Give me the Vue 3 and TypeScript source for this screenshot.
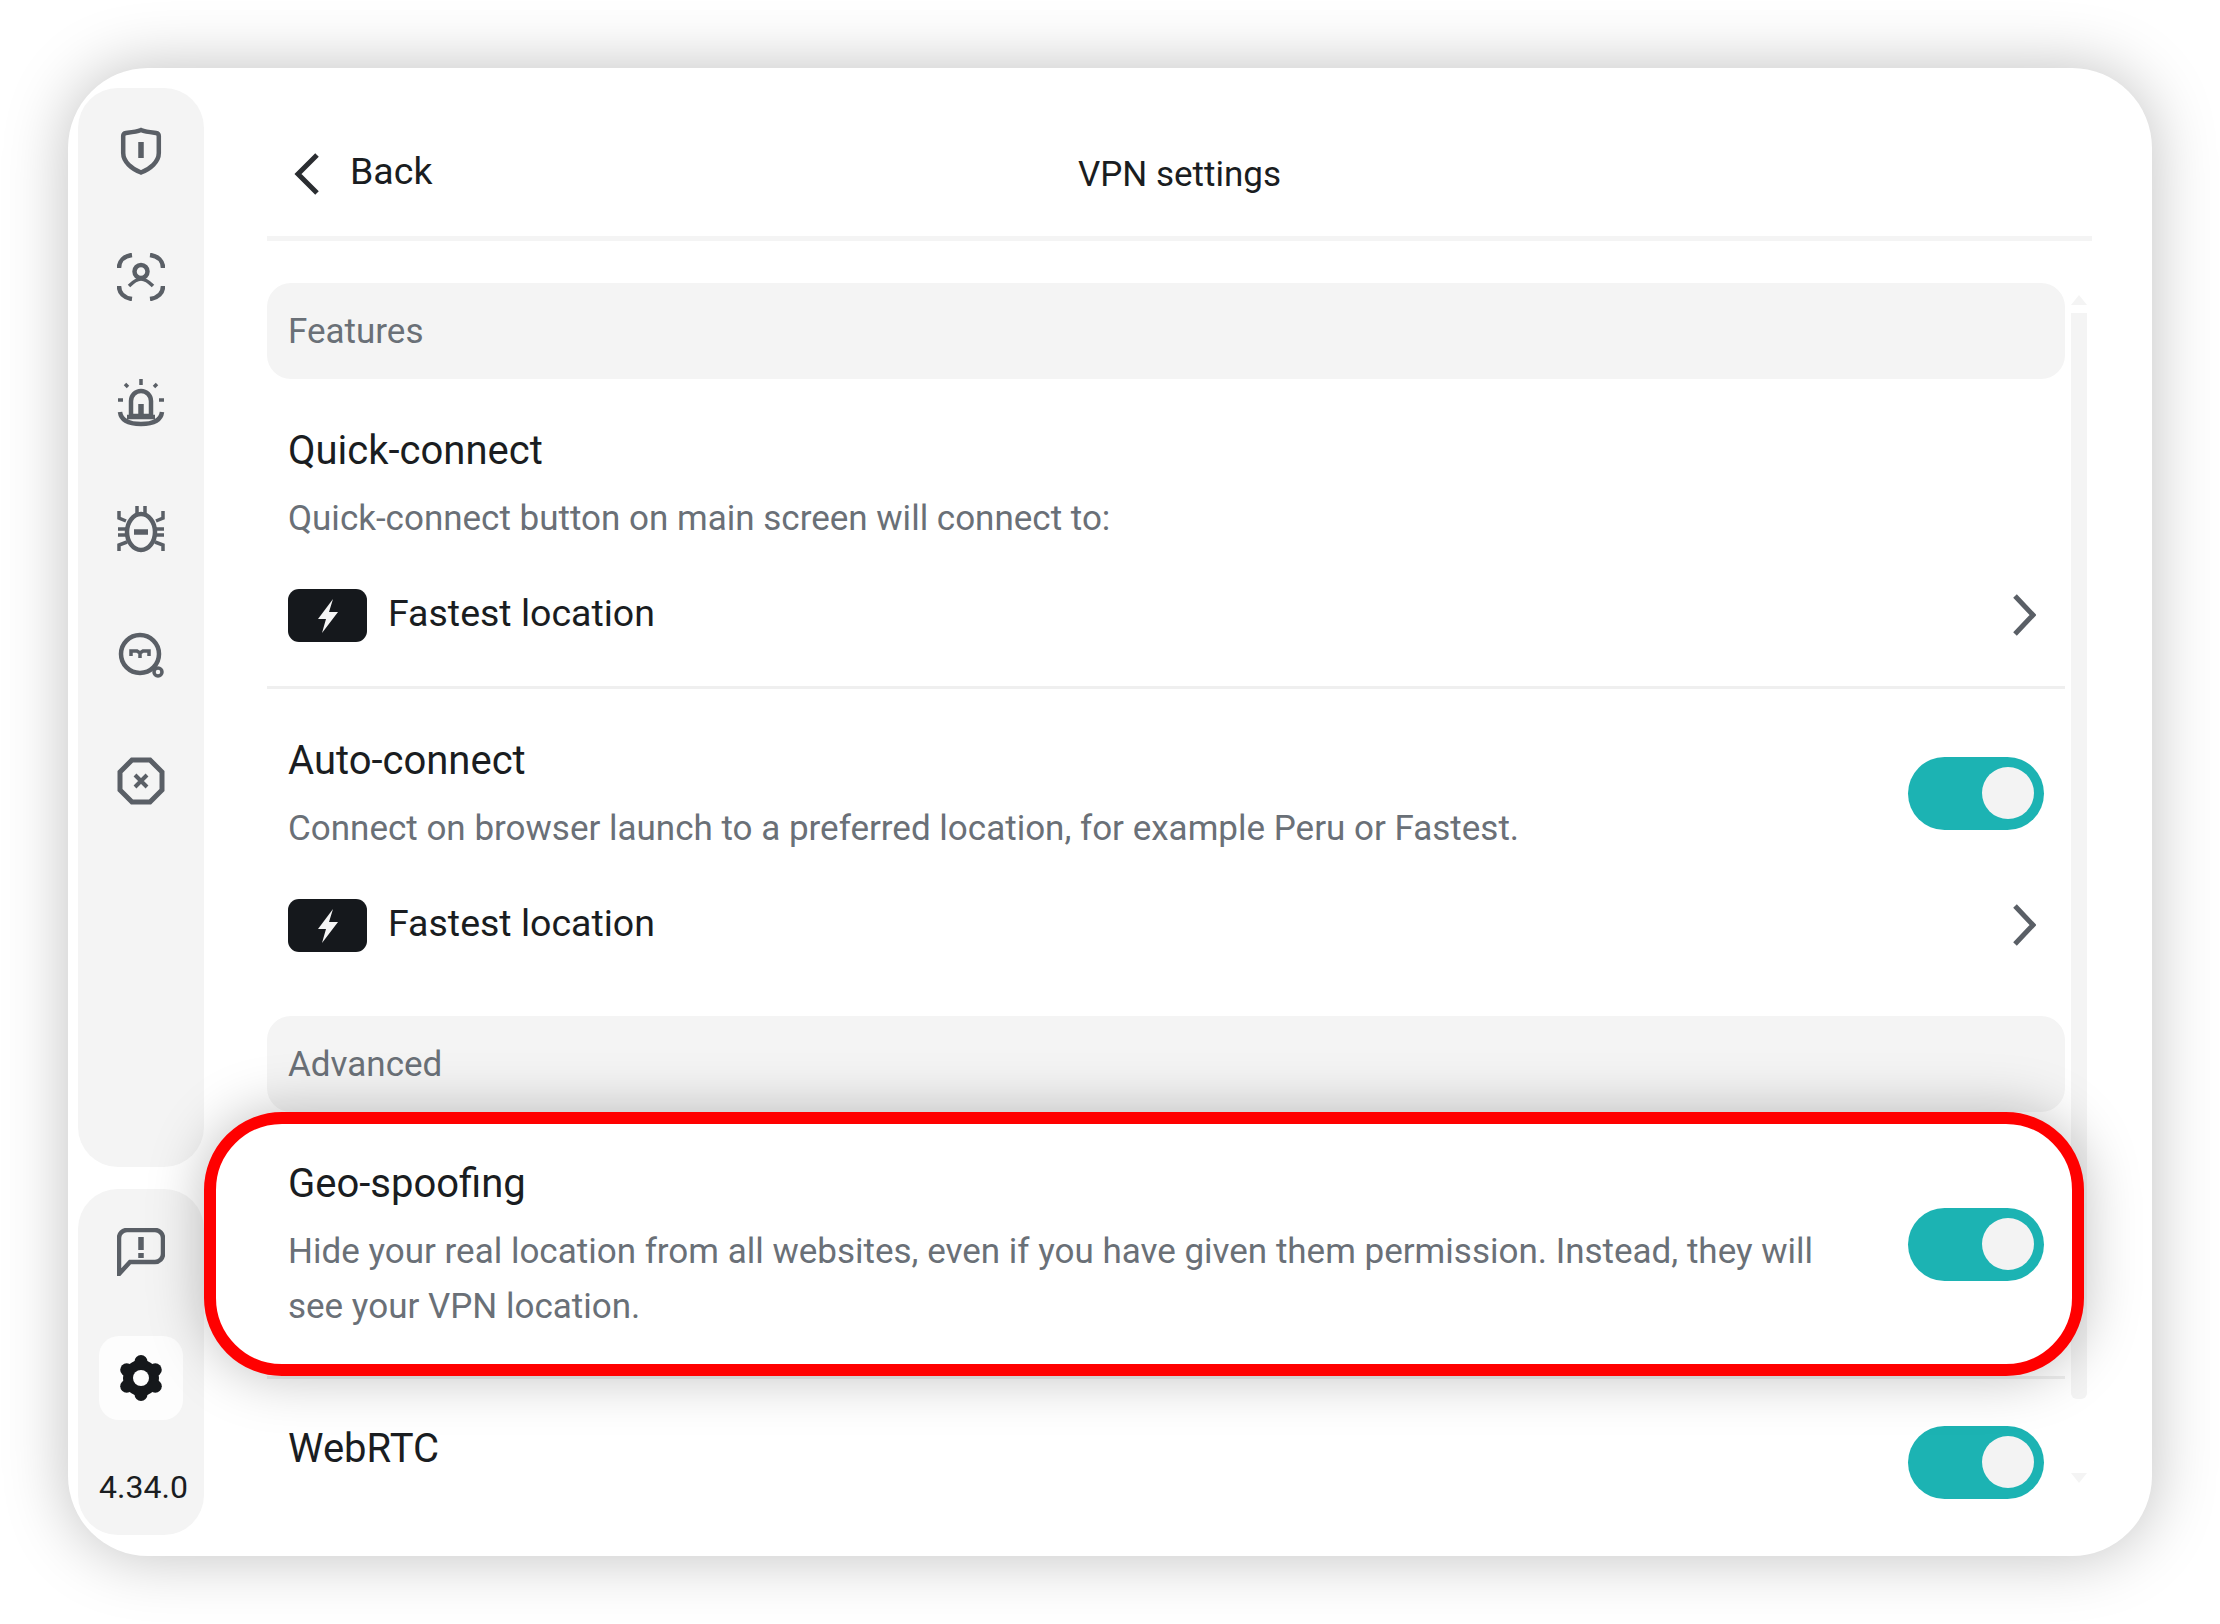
<script setup lang="ts">
import { ref } from "vue";

const toggles = ref({ auto: true, geo: true, webrtc: true });

const gearLobes = [0, 60, 120, 180, 240, 300].map((deg) => {
  const rad = (deg * Math.PI) / 180;
  return { x: 24 + 16.5 * Math.sin(rad), y: 24 - 16.5 * Math.cos(rad) };
});
</script>

<template>
  <div class="page">
    <div class="card">
      <aside class="sidebar">
        <nav class="panel panel-top">
          <div class="nav-item">
            <svg class="nav-icon" width="48" height="48" viewBox="0 0 48 48">
              <path d="M24 3 C29 5 35 5.500 39 6 C41 6.300 41.800 7 41.800 9 V26 C41.800 35 33 42 24 45.500 C15 42 6.200 35 6.200 26 V9 C6.200 7 7 6.300 9 6 C13 5.500 19 5 24 3 Z" />
              <path class="thick" d="M24 15 V31" />
            </svg>
          </div>
          <div class="nav-item">
            <svg class="nav-icon" width="48" height="48" viewBox="0 0 48 48">
              <path d="M2 15 C2 8 7 3 15 2 M33 2 C41 3 46 8 46 15 M46 33 C46 40 41 45 33 46 M15 46 C7 45 2 40 2 33" />
              <circle cx="24" cy="18.500" r="6.500" />
              <path stroke-width="3.500" d="M12 33 C16 29 20 26 24 26 C28 26 32 29 36 33" />
            </svg>
          </div>
          <div class="nav-item">
            <svg class="nav-icon" width="48" height="48" viewBox="0 0 48 48">
              <path d="M14 37 V22 a10 10 0 0 1 20 0 V37 Z" />
              <path class="thick" d="M24 25 V37" />
              <path d="M3 33 C4 41 12 45 24 45 C36 45 44 41 45 33 M10 38 H38" />
              <path stroke-width="3.500" d="M24 0 V6 M8 5 L11 8 M40 5 L37 8 M1 21 H6 M47 21 H42" />
            </svg>
          </div>
          <div class="nav-item">
            <svg class="nav-icon" width="48" height="48" viewBox="0 0 48 48">
              <ellipse cx="24" cy="27" rx="14" ry="18" />
              <path class="thick" d="M17 27 H31" />
              <path stroke-width="3.500" d="M20 1 V9 M28 1 V9 M2 6 V13 L9 16 M46 6 V13 L39 16 M1 24 H9 M47 24 H39 M1 30 H9 M47 30 H39 M2 46 V40 L10 37 M46 46 V40 L38 37" />
            </svg>
          </div>
          <div class="nav-item">
            <svg class="nav-icon" width="48" height="48" viewBox="0 0 48 48">
              <circle cx="23" cy="23" r="19" />
              <circle cx="41" cy="41" r="4" stroke-width="3.500" />
              <path stroke-width="3.500" d="M14 25 V20 H20 L23 22 L26 20 H32 V25 M23 22 V27" />
            </svg>
          </div>
          <div class="nav-item">
            <svg class="nav-icon" width="48" height="48" viewBox="0 0 48 48">
              <path stroke-width="5" d="M15 3 H33 L45 15 V33 L33 45 H15 L3 33 V15 Z" />
              <path stroke-width="4" d="M18 18 L30 30 M30 18 L18 30" />
            </svg>
          </div>
        </nav>

        <div class="panel panel-bottom">
          <div class="nav-item">
            <svg class="nav-icon" width="48" height="48" viewBox="0 0 48 48">
              <path d="M2 46 V10 a8 8 0 0 1 8 -8 H38 a8 8 0 0 1 8 8 V26 a8 8 0 0 1 -8 8 H13 Z" />
              <path class="thick" d="M24 9 V22 M24 25 V30" />
            </svg>
          </div>
          <div class="settings-btn">
            <svg width="48" height="48" viewBox="0 0 48 48">
              <circle cx="24" cy="24" r="18" fill="#15181b" />
              <circle v-for="(lobe, i) in gearLobes" :key="i" :cx="lobe.x" :cy="lobe.y" r="6.500" fill="#15181b" />
              <circle cx="24" cy="24" r="8" fill="#fdfdfd" />
            </svg>
          </div>
          <div class="version">4.34.0</div>
        </div>
      </aside>

      <main class="main">
        <header class="header">
          <div class="back">
            <svg width="26" height="44" viewBox="0 0 26 44">
              <path d="M23 3 L4 22 L23 41" fill="none" stroke="#2a2d31" stroke-width="5" />
            </svg>
            <span>Back</span>
          </div>
          <div class="header-title">VPN settings</div>
        </header>

        <div class="body">
          <div class="list">
            <div class="section">Features</div>

            <div class="row with-line">
              <div class="row-top">
                <div class="row-text">
                  <div class="title">Quick-connect</div>
                  <div class="desc">Quick-connect button on main screen will connect to:</div>
                </div>
              </div>
              <div class="location">
                <span class="bolt">
                  <svg width="79" height="53" viewBox="0 0 79 53"><path d="M45 10 L30 30 H38 L34 44 L50 23 H41 Z" fill="#f5f5f5" /></svg>
                </span>
                <span class="location-name">Fastest location</span>
                <svg class="chevron" width="24" height="44" viewBox="0 0 24 44"><path d="M3 3 L21 22 L3 41" /></svg>
              </div>
            </div>

            <div class="row row-auto">
              <div class="row-top">
                <div class="row-text">
                  <div class="title">Auto-connect</div>
                  <div class="desc">Connect on browser launch to a preferred location, for example Peru or Fastest.</div>
                </div>
                <button class="toggle toggle-auto" :class="{ on: toggles.auto }" @click="toggles.auto = !toggles.auto"><i></i></button>
              </div>
              <div class="location">
                <span class="bolt">
                  <svg width="79" height="53" viewBox="0 0 79 53"><path d="M45 10 L30 30 H38 L34 44 L50 23 H41 Z" fill="#f5f5f5" /></svg>
                </span>
                <span class="location-name">Fastest location</span>
                <svg class="chevron" width="24" height="44" viewBox="0 0 24 44"><path d="M3 3 L21 22 L3 41" /></svg>
              </div>
            </div>

            <div class="section">Advanced</div>

            <div class="row with-line highlighted">
              <div class="row-top">
                <div class="row-text">
                  <div class="title">Geo-spoofing</div>
                  <div class="desc">Hide your real location from all websites, even if you have given them permission. Instead, they will see your VPN location.</div>
                </div>
                <button class="toggle toggle-geo" :class="{ on: toggles.geo }" @click="toggles.geo = !toggles.geo"><i></i></button>
              </div>
            </div>

            <div class="row row-webrtc">
              <div class="row-top">
                <div class="row-text">
                  <div class="title">WebRTC</div>
                </div>
                <button class="toggle toggle-webrtc" :class="{ on: toggles.webrtc }" @click="toggles.webrtc = !toggles.webrtc"><i></i></button>
              </div>
            </div>
          </div>

          <div class="scrollbar">
            <span class="arrow up"></span>
            <span class="thumb"></span>
            <span class="arrow down"></span>
          </div>
        </div>
      </main>
    </div>
  </div>
</template>

<style scoped>
.page {
  padding: 68px;
  font-family: Roboto, "Liberation Sans", sans-serif;
  color: #1a1d21;
}

.card {
  display: flex;
  width: 2084px;
  height: 1488px;
  box-sizing: border-box;
  padding: 20px 60px 21px 10px;
  background: #fff;
  border-radius: 80px;
  box-shadow: 0 0 64px rgba(0, 0, 0, 0.25);
}

.sidebar {
  display: flex;
  flex-direction: column;
  gap: 22px;
  width: 126px;
  flex: none;
}

.panel {
  background: #f4f4f4;
  border-radius: 40px;
  display: flex;
  flex-direction: column;
  align-items: center;
}

.panel-top {
  height: 1079px;
}

.panel-bottom {
  height: 346px;
}

.nav-item {
  height: 126px;
  flex: none;
  display: flex;
  align-items: center;
  justify-content: center;
}

.nav-icon {
  fill: none;
  stroke: #5a5f66;
  stroke-width: 4.5;
}

.nav-icon .thick {
  stroke-width: 5.5;
}

.settings-btn {
  width: 84px;
  height: 84px;
  margin-top: 21px;
  border-radius: 20px;
  background: #fdfdfd;
  display: flex;
  align-items: center;
  justify-content: center;
}

.version {
  margin-top: 52px;
  padding-left: 5px;
  font-size: 32px;
  line-height: 30px;
}

.main {
  flex: 1;
  min-width: 0;
  margin-left: 63px;
  display: flex;
  flex-direction: column;
}

.header {
  display: grid;
  grid-template-columns: 1fr auto 1fr;
  align-items: center;
  height: 148px;
  flex: none;
  border-bottom: 5px solid #f4f4f4;
}

.back {
  display: flex;
  align-items: center;
  gap: 30px;
  margin-left: 27px;
  margin-top: 24px;
  font-size: 37.5px;
}

.back span {
  margin-top: -6px;
}

.header-title {
  font-size: 35px;
  margin-top: 24px;
}

.body {
  display: flex;
  gap: 6px;
  margin-top: 42px;
  padding-right: 5px;
}

.list {
  flex: 1;
  min-width: 0;
}

.section {
  height: 96px;
  box-sizing: border-box;
  padding: 1px 21px 0;
  display: flex;
  align-items: center;
  font-size: 35px;
  color: #6a7077;
  background: #f4f4f4;
  border-radius: 24px;
}

.row {
  padding: 47px 21px 0 21px;
}

.with-line {
  border-bottom: 3px solid #efefef;
}

.row-top {
  display: flex;
  justify-content: space-between;
  gap: 50px;
}

.title {
  font-size: 40px;
  line-height: 50px;
}

.desc {
  margin-top: 15px;
  font-size: 35px;
  line-height: 55px;
  color: #6a7077;
}

.row-text {
  flex: 1;
  min-width: 0;
}

.location {
  display: flex;
  align-items: center;
  height: 54px;
  margin-top: 42px;
  padding-bottom: 44px;
}

.row-auto .location {
  padding-bottom: 64px;
}

.bolt {
  display: block;
  width: 79px;
  height: 53px;
  flex: none;
  background: #15181c;
  border-radius: 11px;
}

.location-name {
  flex: 1;
  margin-left: 21px;
  margin-top: -4px;
  font-size: 37.5px;
}

.chevron {
  margin-right: 8px;
  fill: none;
  stroke: #5a5f66;
  stroke-width: 5;
}

.toggle {
  display: block;
  flex: none;
  width: 136px;
  height: 73px;
  padding: 0;
  border: none;
  border-radius: 37px;
  background: #c9cdd1;
  position: relative;
  cursor: pointer;
}

.toggle.on {
  background: #1cb3b3;
}

.toggle i {
  position: absolute;
  top: 10px;
  left: 10px;
  width: 52px;
  height: 52px;
  border-radius: 50%;
  background: #f3f3f3;
}

.toggle.on i {
  left: 74px;
}

.toggle-auto {
  margin-top: 21px;
}

.toggle-geo {
  margin-top: 49px;
}

.toggle-webrtc {
  margin-top: 2px;
}

.highlighted {
  position: relative;
  z-index: 1;
  padding-bottom: 42px;
}

.highlighted::before {
  content: "";
  position: absolute;
  z-index: -1;
  top: 0;
  bottom: 0;
  left: -63px;
  right: -19px;
  background: #fff;
  border: 12px solid #ff0000;
  border-radius: 78px;
  box-shadow: 0 0 56px rgba(0, 0, 0, 0.25);
}

.row-webrtc {
  padding-top: 45px;
}

.scrollbar {
  width: 16px;
  flex: none;
  display: flex;
  flex-direction: column;
  align-items: center;
  padding-top: 12px;
}

.arrow {
  width: 0;
  height: 0;
  border-left: 8px solid transparent;
  border-right: 8px solid transparent;
}

.arrow.up {
  border-bottom: 10px solid #f4f4f4;
}

.arrow.down {
  margin-top: 74px;
  border-top: 10px solid #f4f4f4;
}

.thumb {
  width: 16px;
  height: 1086px;
  margin-top: 8px;
  background: #f4f4f4;
  border-radius: 0 0 6px 6px;
}
</style>

<style>
html,
body {
  background: #fff;
}
</style>
